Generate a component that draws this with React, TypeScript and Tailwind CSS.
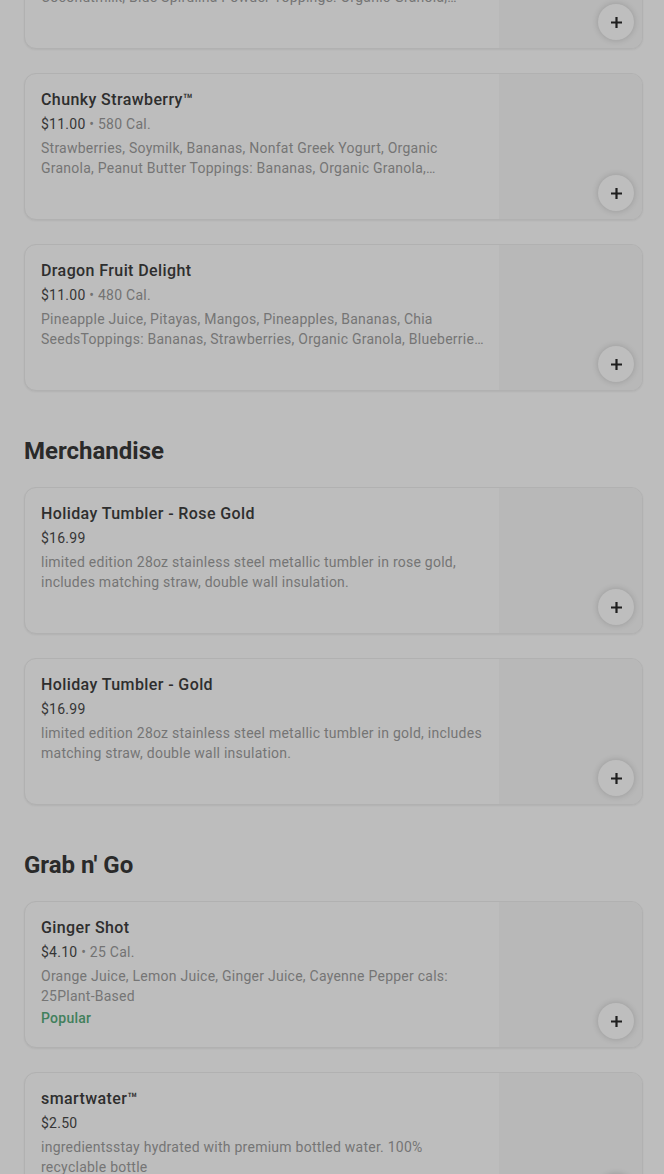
import React from "react";

type Item = {
  title: string;
  price: string;
  cal?: string;
  desc: string;
  popular?: boolean;
};

const PlusIcon = () => (
  <svg width="13" height="13" viewBox="0 0 13 13" fill="none">
    <path d="M6.5 1v11M1 6.5h11" stroke="#1f1f1f" strokeWidth="2.2" strokeLinecap="butt" />
  </svg>
);

function Card({ item }: { item: Item }) {
  return (
    <div className="relative flex h-[147px] rounded-[12px] border border-[#b1b1b1] bg-[#bdbdbd] shadow-[0_1px_2px_rgba(0,0,0,0.06)] overflow-hidden">
      <div className="flex-1 min-w-0 pl-4 pr-[14px] pt-[14px]">
        <div className="text-[16px] leading-6 font-medium text-[#2e2e2e] tracking-[0.4px]">{item.title}</div>
        <div className="mt-[2px] text-[14px] leading-5 text-[#737373] tracking-[0.25px]">
          <span className="text-[#363636]">{item.price}</span>
          {item.cal ? <span> • {item.cal}</span> : null}
        </div>
        <div className="mt-1 text-[14px] leading-5 text-[#757575] tracking-[0.25px] line-clamp-2">{item.desc}</div>
        {item.popular ? (
          <div className="mt-[2px] text-[14px] leading-5 font-medium text-[#41805c] tracking-[0.25px]">Popular</div>
        ) : null}
      </div>
      <div className="w-[143px] shrink-0 bg-[#b8b8b8]" />
      <div className="absolute right-[8px] bottom-[8px] w-9 h-9 rounded-full bg-[#bebebe] shadow-[0_0_6px_rgba(0,0,0,0.18)] flex items-center justify-center">
        <PlusIcon />
      </div>
    </div>
  );
}

function Heading({ children }: { children: React.ReactNode }) {
  return (
    <div className="mt-[44px] mb-[20px] h-8 text-[24px] leading-8 font-bold text-[#2a2a2a]">
      {children}
    </div>
  );
}

const smoothies: Item[] = [
  {
    title: "Blue Majik Bowl",
    price: "$11.00",
    cal: "520 Cal.",
    desc: "Pineapple Juice, Bananas, Mangos, Pineapples, Dates, Cashews, Coconutmilk, Blue Spirulina Powder Toppings: Organic Granola, Bananas, Coconut",
  },
  {
    title: "Chunky Strawberry™",
    price: "$11.00",
    cal: "580 Cal.",
    desc: "Strawberries, Soymilk, Bananas, Nonfat Greek Yogurt, Organic Granola, Peanut Butter Toppings: Bananas, Organic Granola, Strawberries, Honey",
  },
  {
    title: "Dragon Fruit Delight",
    price: "$11.00",
    cal: "480 Cal.",
    desc: "Pineapple Juice, Pitayas, Mangos, Pineapples, Bananas, Chia SeedsToppings: Bananas, Strawberries, Organic Granola, Blueberries, Coconut",
  },
];

const merch: Item[] = [
  {
    title: "Holiday Tumbler - Rose Gold",
    price: "$16.99",
    desc: "limited edition 28oz stainless steel metallic tumbler in rose gold, includes matching straw, double wall insulation.",
  },
  {
    title: "Holiday Tumbler - Gold",
    price: "$16.99",
    desc: "limited edition 28oz stainless steel metallic tumbler in gold, includes matching straw, double wall insulation.",
  },
];

const grab: Item[] = [
  {
    title: "Ginger Shot",
    price: "$4.10",
    cal: "25 Cal.",
    desc: "Orange Juice, Lemon Juice, Ginger Juice, Cayenne Pepper cals: 25Plant-Based",
    popular: true,
  },
  {
    title: "smartwater™",
    price: "$2.50",
    desc: "ingredientsstay hydrated with premium bottled water. 100% recyclable bottle",
  },
];

export default function App() {
  return (
    <div
      className="w-[664px] h-[1174px] overflow-hidden bg-[#bdbdbd]"
      style={{ fontFamily: "Roboto, 'Noto Sans', sans-serif" }}
    >
      <div className="pl-6 pr-[21px] mt-[-98px] flex flex-col">
        <div className="flex flex-col gap-6">
          {smoothies.map((it) => (
            <Card key={it.title} item={it} />
          ))}
        </div>
        <Heading>Merchandise</Heading>
        <div className="flex flex-col gap-6">
          {merch.map((it) => (
            <Card key={it.title} item={it} />
          ))}
        </div>
        <Heading>Grab n' Go</Heading>
        <div className="flex flex-col gap-6">
          {grab.map((it) => (
            <Card key={it.title} item={it} />
          ))}
        </div>
      </div>
    </div>
  );
}
